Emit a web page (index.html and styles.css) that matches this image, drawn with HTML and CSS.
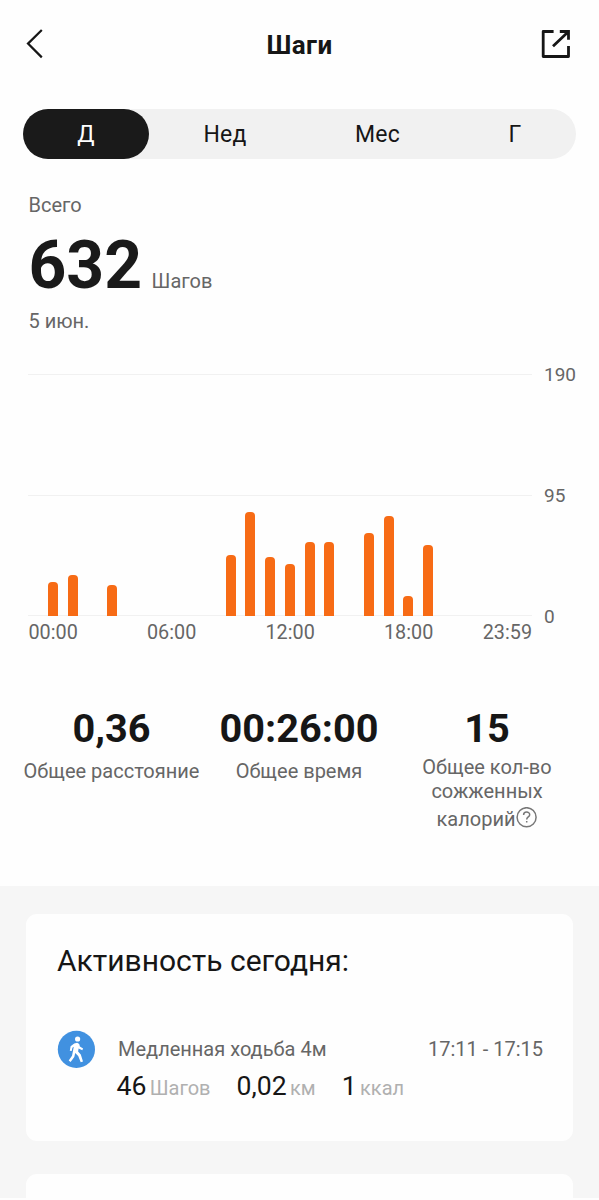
FILE: index.html
```html
<!DOCTYPE html>
<html lang="ru">
<head>
<meta charset="utf-8">
<title>Шаги</title>
<link rel="stylesheet" href="styles.css">
</head>
<body>
<header class="topbar">
  <svg class="back" width="18" height="30" viewBox="0 0 18 30" fill="none" stroke="#161616" stroke-width="2.2"><path d="M15.8 1 L2 14.6 L15.8 28.4"/></svg>
  <h1 class="title">Шаги</h1>
  <svg class="share" width="30" height="30" viewBox="0 0 30 30" fill="none" stroke="#161616" stroke-width="2.8" stroke-linejoin="round"><path d="M12.6 2.5H2.2V27.5H27.5V17"/><path d="M18.8 2.5H27.5V10.8M27 3L12 17.2" stroke-linejoin="miter"/></svg>
</header>
<nav class="tabs">
  <span class="tab tab-active">Д</span>
  <span class="tab">Нед</span>
  <span class="tab">Мес</span>
  <span class="tab">Г</span>
</nav>
<section class="summary">
  <div class="caption">Всего</div>
  <div class="total"><span class="total-value">632</span><span class="total-unit">Шагов</span></div>
  <div class="caption date">5 июн.</div>
</section>
<section class="chart">
  <div class="plot">
    <div class="gridlines"><i></i><i></i><i></i></div>
    <div class="bars">
      <b style="height:34.5px"></b><b style="height:41px"></b><b style="height:0"></b><b style="height:31px"></b>
      <b style="height:0"></b><b style="height:0"></b><b style="height:0"></b><b style="height:0"></b>
      <b style="height:0"></b><b style="height:61.5px"></b><b style="height:104.5px"></b><b style="height:59px"></b>
      <b style="height:52.5px"></b><b style="height:74px"></b><b style="height:74px"></b><b style="height:0"></b>
      <b style="height:83px"></b><b style="height:100.5px"></b><b style="height:20.5px"></b><b style="height:71.5px"></b>
      <b style="height:0"></b><b style="height:0"></b><b style="height:0"></b><b style="height:0"></b>
    </div>
  </div>
  <div class="y-axis"><span>190</span><span>95</span><span>0</span></div>
  <div class="x-axis"><span>00:00</span><span>06:00</span><span>12:00</span><span>18:00</span><span class="x-last">23:59</span></div>
</section>
<section class="stats">
  <div class="stat"><div class="stat-value">0,36</div><div class="stat-label">Общее расстояние</div></div>
  <div class="stat"><div class="stat-value">00:26:00</div><div class="stat-label">Общее время</div></div>
  <div class="stat">
    <div class="stat-value">15</div>
    <div class="stat-label stat-multi">
      <div>Общее кол-во</div><div>сожженных</div>
      <div class="with-help"><span>калорий</span><svg width="22" height="21" viewBox="0 0 22 21" fill="none" stroke="#777" stroke-width="1.5"><circle cx="11.6" cy="10.2" r="9.5"/><path d="M8.6 8C8.6 4.1 14.7 4.2 14.7 7.7C14.7 10 11.7 9.9 11.7 12.4M11.7 13.9V15.6"/></svg></div>
    </div>
  </div>
</section>
<main class="feed">
  <article class="card">
    <h2 class="card-title">Активность сегодня:</h2>
    <div class="activity">
      <svg class="walk" width="38" height="38" viewBox="0 0 38 38"><circle cx="19.4" cy="19.4" r="18.6" fill="#4191e0"/><circle cx="20.6" cy="9" r="2.6" fill="#fff"/><path d="M17.2 13.6L20.2 12.7L22.2 14L22.9 16.4L26.1 18.4L25.3 20.2L21.6 18.5L21.1 21.4L23.8 24.6L26 31.4L23.7 32.2L21.2 26L18.2 22.9L17.3 26.9L13.6 32L11.7 30.5L15 25.8L16.8 16.8L15.4 17.7L14.7 21.1L12.8 20.8L13.6 16.3Z" fill="#fff"/></svg>
      <div class="activity-body">
        <div class="activity-head"><span class="activity-name">Медленная ходьба 4м</span><span class="activity-time">17:11 - 17:15</span></div>
        <div class="metrics">
          <div class="metric"><span class="num">46</span><span class="unit">Шагов</span></div>
          <div class="metric"><span class="num">0,02</span><span class="unit">км</span></div>
          <div class="metric"><span class="num">1</span><span class="unit">ккал</span></div>
        </div>
      </div>
    </div>
  </article>
  <article class="card card-next"></article>
</main>
</body>
</html>
```
FILE: styles.css
```css
* { box-sizing: border-box; }
body {
  margin: 0;
  height: 1200px;
  overflow: hidden;
  background: #fefefe;
  color: #161616;
  font-family: Roboto, "Noto Sans", sans-serif;
}
svg { display: block; flex: none; }
.topbar {
  height: 109px;
  padding: 29px 28px 0 26px;
  display: grid;
  grid-template-columns: 82px 1fr 80px;
  align-items: start;
}
.share { justify-self: end; }
.title {
  margin: 0;
  font-size: 26px;
  letter-spacing: .4px;
  line-height: 33px;
  font-weight: 700;
  text-align: center;
}
.tabs {
  margin: 0 23px;
  height: 50px;
  border-radius: 25px;
  background: #f1f1f1;
  display: grid;
  grid-template-columns: 126px 152px 153px 1fr;
  grid-template-rows: 50px;
}
.tab {
  font-size: 23px;
  line-height: 52px;
  letter-spacing: .2px;
  text-align: center;
}
.tab-active { background: #1a1a1a; color: #fff; border-radius: 25px; }
.summary { padding: 34px 28px 0 28.5px; height: 215px; }
.caption { font-size: 20px; line-height: 24px; color: #666; }
.total { display: flex; align-items: baseline; height: 92px; line-height: 97px; }
.total-value { font-size: 66px; font-weight: 700; color: #1a1a1a; }
.total-unit { font-size: 20px; color: #666; margin-left: 9.5px; }
.chart {
  display: grid;
  grid-template-columns: 504px 1fr;
  grid-template-rows: 242px 80px;
  padding-left: 28px;
}
.plot { display: grid; }
.gridlines, .bars { grid-area: 1 / 1; }
.gridlines { display: flex; flex-direction: column; justify-content: space-between; }
.gridlines i { height: 1px; background: #f1f1f1; }
.bars {
  padding: 0 15px;
  display: grid;
  grid-template-columns: repeat(24, 1fr);
  align-items: end;
  justify-items: center;
}
.bars b { width: 10px; background: #f76b15; border-radius: 4px 4px 0 0; }
.y-axis {
  margin: -11px 0 -13px 12px;
  display: flex;
  flex-direction: column;
  justify-content: space-between;
  font-size: 19px;
  line-height: 24px;
  color: #666;
}
.x-axis {
  padding: 5px 0 0 .5px;
  display: grid;
  grid-template-columns: 118.5px 118.5px 118.5px 1fr auto;
  font-size: 19.8px;
  line-height: 24px;
  color: #666;
}
.stats {
  display: grid;
  grid-template-columns: 187px 188px 188px;
  justify-content: center;
  height: 190px;
  text-align: center;
}
.stat-value { font-size: 39.7px; height: 60px; line-height: 65px; font-weight: 700; }
.stat-label { margin-top: 3px; font-size: 20px; line-height: 24px; color: #666; white-space: nowrap; }
.stat-multi { margin-top: 0; line-height: 23.5px; }
.with-help { display: flex; justify-content: center; line-height: 32px; }
.with-help svg { margin-top: 4px; }
.feed { height: 312px; padding: 28px 26px 0; background: #f6f6f6; overflow: hidden; }
.card { height: 227px; padding: 26px 30px 0 31px; border-radius: 11px; background: #fefefe; }
.card-next { margin-top: 33px; height: 60px; border-radius: 11px; }
.card-title { margin: 0; font-size: 30px; line-height: 42px; font-weight: 400; }
.activity { display: flex; margin-top: 48px; }
.activity-body { flex: 1; padding-left: 23px; }
.activity-head { display: flex; justify-content: space-between; font-size: 20px; line-height: 38px; color: #666; }
.metrics { display: flex; gap: 26px; line-height: 35px; margin-left: -1.5px; }
.metric { display: flex; align-items: baseline; }
.num { font-size: 26.6px; }
.unit { margin-left: 3.4px; font-size: 20px; color: #b0b0b0; }
```
